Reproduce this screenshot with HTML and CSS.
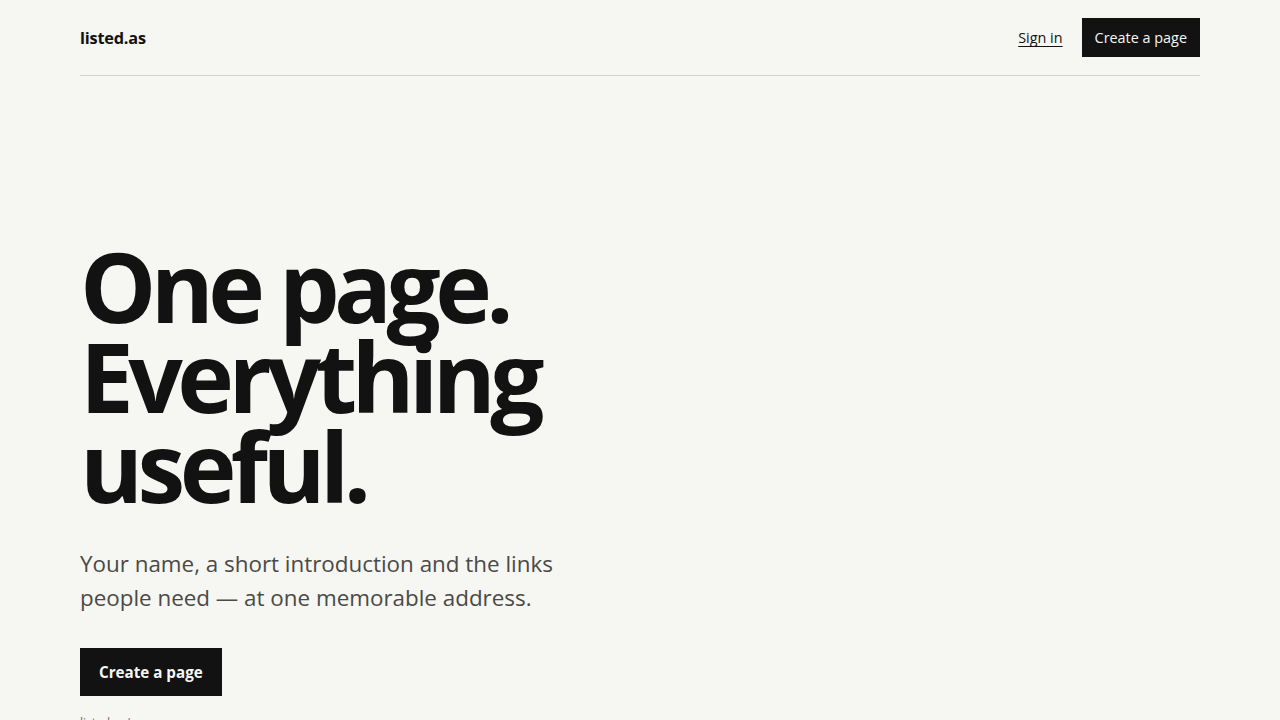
FILE: index.html
```html
<!DOCTYPE html>
<html lang="en">
<head>
<meta charset="utf-8">
<title>listed.as</title>
<link rel="stylesheet" href="styles.css">
</head>
<body>
<div class="wrap">
  <header class="site-header">
    <a class="logo" href="#">listed.as</a>
    <nav class="nav">
      <a class="nav-link" href="#">Sign in</a>
      <a class="nav-btn" href="#">Create a page</a>
    </nav>
  </header>
  <main class="hero">
    <h1 class="headline">One page.<br>Everything<br>useful.</h1>
    <p class="lead">Your name, a short introduction and the links people need — at one memorable address.</p>
    <a class="cta" href="#">Create a page</a>
    <p class="note">listed.as/yourname</p>
  </main>
</div>
</body>
</html>
```
FILE: styles.css
```css
* { box-sizing: border-box; }
html, body { margin: 0; padding: 0; }
body {
  background: #f6f6f2;
  color: #121212;
  font-family: "Open Sans", "Noto Sans", sans-serif;
}
a { color: inherit; text-decoration: none; }
.wrap {
  width: 1120px;
  margin: 0 auto;
}
.site-header {
  display: flex;
  align-items: center;
  justify-content: space-between;
  padding: 18px 0;
  border-bottom: 1px solid #d4d4cf;
}
.logo {
  font-weight: 700;
  font-size: 16.3px;
  letter-spacing: -0.2px;
}
.nav {
  display: flex;
  align-items: center;
  gap: 19px;
}
.nav-link {
  font-size: 14.4px;
  text-decoration: underline;
  text-underline-offset: 3px;
}
.nav-btn {
  display: flex;
  align-items: center;
  height: 39px;
  padding: 0 13px;
  background: #121212;
  color: #f6f6f2;
  font-size: 14.4px;
}
.hero {
  padding-top: 165px;
}
.headline {
  margin: 0;
  font-size: 96px;
  line-height: 90px;
  font-weight: 700;
  letter-spacing: -0.058em;
  color: #121212;
}
.lead {
  margin: 36px 0 0;
  max-width: 520px;
  font-size: 22.4px;
  line-height: 34px;
  color: #4a4a46;
}
.cta {
  display: inline-flex;
  align-items: center;
  margin-top: 33px;
  height: 48px;
  padding: 0 19px;
  background: #121212;
  color: #f6f6f2;
  font-weight: 700;
  font-size: 15.2px;
}
.note {
  margin: 18px 0 0;
  font-size: 12px;
  color: #6a6a66;
}
```
